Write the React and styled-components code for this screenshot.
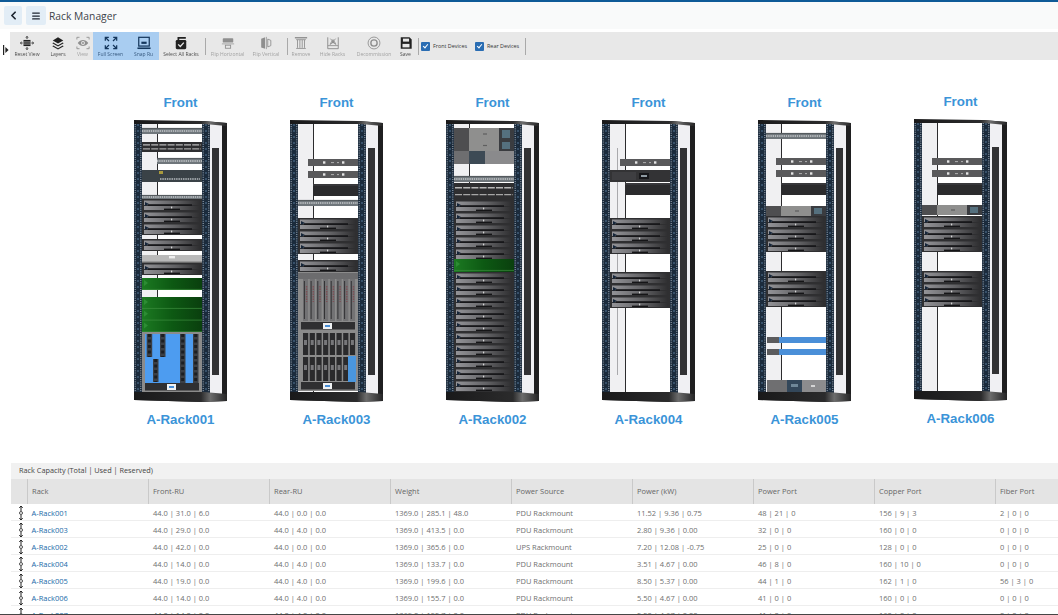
import React from 'react';
import styled, { createGlobalStyle } from 'styled-components';
import { ChevronLeft, Menu } from 'lucide-react';

const UI_FONT = '"Open Sans", "Noto Sans", sans-serif';

const GlobalStyle = createGlobalStyle`
  html, body {
    margin: 0;
    padding: 0;
    height: 100%;
    background: #fff;
    overflow: hidden;
    font-family: ${UI_FONT};
  }
  #root { height: 100%; }
`;

/* ---------- rack drawing, coordinates are px from the rack's top left ---------- */

const Rail = ({ x }) => (
  <g>
    <rect x={x} y="3" width="8" height="270" fill="#1b2b3c" />
    <line x1={x + 1.2} y1="4" x2={x + 1.2} y2="272" stroke="#c9d3dc" strokeWidth="0.9" strokeDasharray="0.9 1.3" />
    <line x1={x + 6.8} y1="4" x2={x + 6.8} y2="272" stroke="#c9d3dc" strokeWidth="0.9" strokeDasharray="0.9 1.3" />
    <line x1={x + 4} y1="4" x2={x + 4} y2="272" stroke="#3f5a75" strokeWidth="1.6" strokeDasharray="2 4" />
  </g>
);

const Server = ({ y }) => (
  <g>
    <rect x="8" y={y} width="60" height="12" fill="#2f2f31" />
    <rect x="10" y={y + 1.5} width="56" height="4.5" fill="url(#srvTop)" />
    <rect x="10" y={y + 7} width="56" height="4" fill="url(#srvTop)" />
    <rect x="14" y={y + 5.2} width="44" height="1.8" fill="#17171a" />
    <rect x="30" y={y + 9.6} width="16" height="1.4" fill="#151517" />
    <polygon points={`11,${y + 3} 15,${y + 5} 11,${y + 7}`} fill="#16263a" />
    <rect x="37" y={y + 7.6} width="1.2" height="1.8" fill="#d5d5d5" />
  </g>
);

const Green = ({ y, h }) => (
  <g>
    <rect x="8" y={y} width="60" height={h} fill="url(#greenFill)" />
    {Array.from({ length: Math.floor(h / 11.5) }, (_, i) => (
      <g key={i}>
        <polygon points={`10,${y + i * 11.7 + 2} 14,${y + i * 11.7 + 5} 10,${y + i * 11.7 + 8}`} fill="#2d8d34" />
        <line x1="8" y1={y + i * 11.7 + 11.4} x2="68" y2={y + i * 11.7 + 11.4} stroke="#3e8f3f" strokeWidth="0.7" />
      </g>
    ))}
  </g>
);

const Patch = ({ y, h = 6, from = 8 }) => (
  <g>
    <rect x={from} y={y} width={68 - from} height={h} fill="#6f767b" />
    <line x1={from} y1={y + h / 2} x2="68" y2={y + h / 2} stroke="#c5c9cc" strokeWidth="1.6" strokeDasharray="1.4 0.8" />
    <line x1={from} y1={y + 0.4} x2="68" y2={y + 0.4} stroke="#4a4f52" strokeWidth="0.8" />
  </g>
);

const DoublePatch = ({ y, h = 17 }) => (
  <g>
    <rect x="8" y={y} width="60" height={h} fill="#2e2e30" />
    <line x1="9" y1={y + h * 0.28} x2="67" y2={y + h * 0.28} stroke="#b9b9b9" strokeWidth="1.3" strokeDasharray="7 1.2" />
    <line x1="9" y1={y + h * 0.68} x2="67" y2={y + h * 0.68} stroke="#a6a6a6" strokeWidth="1.3" strokeDasharray="7 1.2" />
  </g>
);

const Pdu = ({ y, from = 18 }) => (
  <g>
    <rect x={from} y={y} width={68 - from} height="7" fill="#59595b" />
    <rect x={from + 15} y={y + 2.3} width="2.4" height="2.4" fill="#e6e6e6" />
    <rect x={from + 23} y={y + 3.2} width="3" height="0.9" fill="#bbb" />
    <rect x={from + 29} y={y + 3.2} width="2" height="0.9" fill="#bbb" />
    <rect x={from + 34} y={y + 2.3} width="2.4" height="2.4" fill="#e6e6e6" />
  </g>
);

const DarkPanel = ({ y, h = 12 }) => (
  <g>
    <rect x="23" y={y} width="45" height={h} fill="#2b2b2d" />
    <line x1="23" y1={y + 1} x2="68" y2={y + 1} stroke="#4d4d50" strokeWidth="0.8" />
  </g>
);

const Ups = ({ y }) => (
  <g>
    <rect x="8" y={y} width="60" height="12" fill="#333335" />
    <rect x="10" y={y + 2} width="24" height="8" fill="#3e3e41" />
    <rect x="37" y={y + 3} width="10" height="6" fill="#17171a" />
    <rect x="39" y={y + 5} width="6" height="2" fill="#8f9aa2" />
  </g>
);

/* front panel made of three blocks: dark, pale, bluish */
const Storage = ({ y, h = 10 }) => (
  <g>
    <rect x="8" y={y} width="15" height={h} fill="#4e4e50" />
    <rect x="23" y={y} width="30" height={h} fill="#8f8f8e" />
    <rect x="37" y={y + h / 2 - 0.6} width="4" height="1.2" fill="#5f5f5f" />
    <rect x="53" y={y} width="15" height={h} fill="#3a3c40" />
    <rect x="56" y={y + 2} width="8" height={h - 4} fill="#55707e" />
  </g>
);

const SilverServer = ({ y, h = 6 }) => (
  <g>
    <rect x="8" y={y} width="60" height={h} fill="#b9b9b9" />
    <rect x="8" y={y + h - 1.4} width="60" height="1.4" fill="#6a6a6a" />
    <rect x="35" y={y + 1} width="6" height="2.4" fill="#eee" />
  </g>
);

const ChassisBase = ({ y, h }) => (
  <g>
    <rect x="8" y={y} width="60" height={h} fill="#8b8b8b" />
    <rect x="11" y={y + h - 9} width="54" height="7.5" fill="#2f2f31" />
    <rect x="33" y={y + h - 8} width="9" height="6" fill="#f0f2f4" />
    <rect x="35" y={y + h - 6} width="5" height="2" fill="#4a8fd6" />
  </g>
);

const BlueChassis = ({ y }) => (
  <g>
    <ChassisBase y={y} h={60} />
    <rect x="11" y={y + 2} width="35" height="49" fill="#4d9cf0" />
    <rect x="51" y={y + 2} width="8" height="49" fill="#4d9cf0" />
    {[[12.7, 2, 23], [26, 2, 23], [19, 27, 23], [46, 2, 49], [59, 2, 49]].map(([x, top, len]) => (
      <g key={x}>
        <rect x={x} y={y + top} width="5.5" height={len} fill="#3b3f45" />
        <line x1={x + 2.7} y1={y + top} x2={x + 2.7} y2={y + top + len} stroke="#1c1e22" strokeWidth="3" strokeDasharray="3 2.5" />
      </g>
    ))}
  </g>
);

const BLADE_COLS = [13, 19.7, 26.4, 33.1, 39.8, 46.5, 53.2, 59.9];

const GreyChassis = ({ y }) => (
  <g>
    <ChassisBase y={y} h={59} />
    <rect x="8" y={y + 1} width="60" height="6" fill="#6c6c6e" />
    {BLADE_COLS.map((x) => (
      <g key={x}>
        <rect x={x} y={y + 7} width="5.2" height="42" fill="#727274" />
        <line x1={x + 1.4} y1={y + 9} x2={x + 1.4} y2={y + 47} stroke="#2a2a2c" strokeWidth="0.9" />
        <line x1={x + 3.6} y1={y + 14} x2={x + 3.6} y2={y + 30} stroke="#7d4f55" strokeWidth="1.4" strokeDasharray="1.5 1" />
      </g>
    ))}
  </g>
);

const DarkChassis = ({ y }) => (
  <g>
    <ChassisBase y={y} h={60} />
    {BLADE_COLS.map((x) => (
      <g key={x}>
        <rect x={x} y={y + 2} width="5.2" height="22" fill="#2a2a2c" />
        <rect x={x + 1} y={y + 9} width="3" height="5" fill="#77777a" />
        <rect x={x} y={y + 26} width="5.2" height="24" fill="#2a2a2c" />
        <rect x={x + 1} y={y + 34} width="3" height="5" fill="#77777a" />
      </g>
    ))}
    <rect x="58" y={y + 25} width="8" height="26" fill="#4a96de" />
  </g>
);

const BlueBar = ({ y }) => (
  <g>
    <rect x="9" y={y} width="12" height="6" fill="#5b5b5d" />
    <rect x="21" y={y} width="47" height="6" fill="#4a8fd8" />
  </g>
);

const BottomUnit = ({ y }) => (
  <g>
    <rect x="9" y={y} width="20" height="12" fill="#6f6f71" />
    <rect x="29" y={y} width="15" height="12" fill="#33475a" />
    <rect x="33" y={y + 4} width="7" height="3" fill="#6f8798" />
    <rect x="44" y={y} width="24" height="12" fill="#8c8c8e" />
    <rect x="53" y={y + 5} width="4" height="2" fill="#d5d5d5" />
  </g>
);

const servers = (start, count) =>
  Array.from({ length: count }, (_, i) => <Server key={`s${start}-${i}`} y={start + i * 12} />);

const Rack = ({ fittings, guide }) => (
  <RackFigure viewBox="0 0 94 282" width="94" height="282">
    <defs>
      <linearGradient id="srvTop" x1="0" x2="1" y1="0" y2="0">
        <stop offset="0" stopColor="#939397" />
        <stop offset="0.55" stopColor="#626265" />
        <stop offset="1" stopColor="#2e2e30" />
      </linearGradient>
      <linearGradient id="greenFill" x1="0" x2="1" y1="0" y2="0">
        <stop offset="0" stopColor="#1c7a22" />
        <stop offset="0.5" stopColor="#0d5913" />
        <stop offset="1" stopColor="#0a3f0e" />
      </linearGradient>
      <linearGradient id="frameTop" x1="0" x2="1" y1="0" y2="0">
        <stop offset="0" stopColor="#19191a" />
        <stop offset="0.72" stopColor="#2b2b2c" />
        <stop offset="0.82" stopColor="#6c6c6c" />
        <stop offset="1" stopColor="#242425" />
      </linearGradient>
    </defs>
    <polygon points="0,1 70,1 93,3 93,281 68,282 0,280" fill="#1f1f20" />
    <rect x="76" y="4" width="12" height="270" fill="#f0f0f3" />
    <rect x="78" y="28" width="7" height="227" fill="#323234" />
    <rect x="8" y="4" width="60" height="268" fill="#fff" />
    <rect x="8" y="4" width="15" height="268" fill="#f0f0f2" />
    <rect x="23" y="4" width="1" height="268" fill="#2c2c2e" />
    {guide && <rect x="15" y="28" width="1" height="227" fill="#a9a9ac" />}
    {fittings}
    <Rail x={0} />
    <Rail x={68} />
    <polygon points="0,0 68,1 93,3 93,6 70,4 0,4" fill="url(#frameTop)" />
    <polygon points="0,272 70,272 93,274 93,281 68,282 0,280" fill="url(#frameTop)" />
  </RackFigure>
);

const RACKS = [
  {
    name: 'A-Rack001',
    lift: 0,
    fittings: (
      <>
        <Patch y={8} />
        <DoublePatch y={22} h={10} />
        <Patch y={38} from={23} />
        <rect x="8" y="50" width="60" height="12" fill="#3a4247" />
        <rect x="25" y="51" width="4" height="3" fill="#a99a3c" />
        <line x1="26" y1="59" x2="66" y2="59" stroke="#b6bcc0" strokeWidth="1.5" strokeDasharray="1.5 0.8" />
        <Patch y={75} h={4} />
        {servers(79, 3)}
        {servers(119, 1)}
        <SilverServer y={135} h={8} />
        <Server y={143} />
        <Green y={158} h={12} />
        <Green y={177} h={35} />
        <BlueChassis y={212} />
      </>
    ),
  },
  {
    name: 'A-Rack003',
    lift: 0,
    fittings: (
      <>
        <Pdu y={39} />
        <Pdu y={51} />
        <DarkPanel y={64} />
        <Patch y={80} />
        {servers(98, 3)}
        <Server y={140} />
        <GreyChassis y={152} />
        <DarkChassis y={211} />
      </>
    ),
  },
  {
    name: 'A-Rack002',
    lift: 0,
    fittings: (
      <>
        <Storage y={8} h={12} />
        <Storage y={20} h={11} />
        <rect x="8" y="31" width="15" height="13" fill="#6e6e70" />
        <rect x="23" y="31" width="16" height="13" fill="#3d4a55" />
        <rect x="39" y="31" width="29" height="13" fill="#8a8a8c" />
        <Patch y={56} />
        <DoublePatch y={63} />
        {servers(80, 5)}
        <Green y={139} h={13} />
        {servers(152, 10)}
      </>
    ),
  },
  {
    name: 'A-Rack004',
    lift: 0.5,
    guide: true,
    fittings: (
      <>
        <Pdu y={39} />
        <Ups y={50} />
        <DarkPanel y={63} />
        {servers(98, 3)}
        {servers(152, 3)}
      </>
    ),
  },
  {
    name: 'A-Rack005',
    lift: 0.5,
    fittings: (
      <>
        <Patch y={13} />
        <Pdu y={38} />
        <Pdu y={50} />
        <DarkPanel y={63} />
        <Storage y={86} />
        {servers(96, 3)}
        {servers(151, 3)}
        <BlueBar y={217} />
        <BlueBar y={229} />
        <BottomUnit y={260} />
      </>
    ),
  },
  {
    name: 'A-Rack006',
    lift: 1,
    fittings: (
      <>
        <Pdu y={39} />
        <Pdu y={51} />
        <DarkPanel y={64} />
        <Storage y={86} />
        {servers(97, 3)}
        {servers(152, 3)}
      </>
    ),
  },
];

/* ---------- toolbar icons ---------- */

const Glyph = ({ children, color = 'currentColor', size = 14 }) => (
  <svg width={size} height={size} viewBox="0 0 16 16" fill="none" stroke={color} strokeWidth="1.4">
    {children}
  </svg>
);

const ResetIcon = () => (
  <Glyph>
    <rect x="4" y="4.5" width="8" height="7" fill="currentColor" stroke="none" />
    <path d="M4 6.8h8M4 9.2h8" stroke="#e8e8e8" strokeWidth="0.7" />
    <path d="M8 .5v3M6.8 1.8 8 .5l1.2 1.3M8 15.5v-3M6.8 14.2 8 15.5l1.2-1.3M.5 8h2.5M1.8 6.8.5 8l1.3 1.2M15.5 8H13M14.2 6.8 15.5 8l-1.3 1.2" strokeWidth="1" />
  </Glyph>
);

const LayersIcon = () => (
  <Glyph>
    <path d="M8 1.5 14 5 8 8.5 2 5Z" fill="currentColor" stroke="none" />
    <path d="M2.6 7.5 8 10.6l5.4-3.1L14.5 8.3 8 12 1.5 8.3Z" fill="currentColor" stroke="none" />
    <path d="M2.6 10.8 8 13.9l5.4-3.1 1.1.8L8 15.3 1.5 11.6Z" fill="currentColor" stroke="none" />
  </Glyph>
);

const ViewIcon = () => (
  <Glyph>
    <path d="M1 4V1.5h3M12 1.5h3V4M15 12v2.5h-3M4 14.5H1V12" strokeWidth="1" />
    <path d="M2 8c3-4.4 9-4.4 12 0-3 4.4-9 4.4-12 0Z" fill="currentColor" stroke="none" />
    <circle cx="8" cy="8" r="2.2" fill="#e8e8e8" stroke="none" />
    <circle cx="8" cy="8" r="1.1" fill="currentColor" stroke="none" />
  </Glyph>
);

const FullScreenIcon = () => (
  <Glyph>
    <path d="M1.5 5.5v-4h4M1.7 1.7l4 4M14.5 5.5v-4h-4M14.3 1.7l-4 4M1.5 10.5v4h4M1.7 14.3l4-4M14.5 10.5v4h-4M14.3 14.3l-4-4" />
  </Glyph>
);

const SnapIcon = () => (
  <Glyph>
    <rect x="2" y="1.5" width="12" height="10" />
    <rect x="5" y="6.5" width="6" height="2.5" fill="currentColor" stroke="none" />
    <path d="M.5 14h15" strokeWidth="1.8" />
  </Glyph>
);

const SelectAllIcon = () => (
  <Glyph>
    <path d="M4 1h9.5v2H6v2H4Z" fill="currentColor" stroke="none" />
    <rect x="2" y="4.5" width="12" height="10.5" rx="1.5" fill="currentColor" stroke="none" />
    <path d="M4.8 9.6 7.2 12l4-4.4" stroke="#e8e8e8" strokeWidth="1.5" />
  </Glyph>
);

const FlipHorizontalIcon = () => (
  <Glyph>
    <rect x="2" y="2.5" width="12" height="5" rx="1" fill="currentColor" stroke="none" />
    <path d="M1 9h14" strokeWidth="0.8" />
    <rect x="5" y="10.5" width="6" height="3.5" stroke="currentColor" strokeWidth="1" />
  </Glyph>
);

const FlipVerticalIcon = () => (
  <Glyph>
    <path d="M2.5 3 7 1.5v13L2.5 13Z" fill="currentColor" stroke="none" />
    <path d="M8.5 1v14" strokeWidth="0.8" />
    <path d="M10 3.5 13.5 5v6L10 12.5Z" strokeWidth="1" />
  </Glyph>
);

const RemoveIcon = () => (
  <Glyph>
    <path d="M1 2h14" strokeWidth="1.6" />
    <path d="M2.5 4.2h11M4 4.5v9M6.7 4.5v9M9.4 4.5v9M12 4.5v9M2.5 14.2h11" strokeWidth="1" />
  </Glyph>
);

const HideRacksIcon = () => (
  <Glyph>
    <path d="M2 1.5v13h12v-13" strokeWidth="1.1" />
    <path d="M2 11h12" strokeWidth="1" />
    <path d="M4.5 9.5 8 4l3.5 5.5M5 3l6 7M11 3l-6 7" strokeWidth="1" />
    <circle cx="8" cy="7" r="1.4" fill="currentColor" stroke="none" />
  </Glyph>
);

const DecommissionIcon = () => (
  <Glyph>
    <circle cx="8" cy="8" r="6.8" strokeWidth="1" />
    <circle cx="8" cy="8" r="3.6" strokeWidth="1.6" />
  </Glyph>
);

const SaveIcon = () => (
  <Glyph>
    <path d="M2 1.5h10l2.5 2.5v10.5H2Z" fill="currentColor" stroke="none" />
    <rect x="4.5" y="3" width="7" height="3.4" fill="#e8e8e8" stroke="none" />
    <rect x="4" y="9" width="8" height="4" fill="#e8e8e8" stroke="none" />
  </Glyph>
);

const DragHandle = () => (
  <svg width="6" height="14" viewBox="0 0 6 14" fill="none" stroke="#222" strokeWidth="1">
    <path d="M3 0v5M1.3 1.9 3 0l1.7 1.9M3 14V9M1.3 12.1 3 14l1.7-1.9" />
    <circle cx="3" cy="7" r="1.5" strokeWidth="0.8" />
  </svg>
);

const TOOLS = [
  { label: 'Reset View', width: 34, icon: <ResetIcon /> },
  { label: 'Layers', width: 28, icon: <LayersIcon /> },
  { label: 'View', width: 21, icon: <ViewIcon />, off: true },
  { label: 'Full Screen', width: 35, icon: <FullScreenIcon />, on: true },
  { label: 'Snap Ru', width: 31, icon: <SnapIcon />, on: true },
  { label: 'Select All Racks', width: 44, icon: <SelectAllIcon /> },
  { divider: true },
  { label: 'Flip Horizontal', width: 39, icon: <FlipHorizontalIcon />, off: true },
  { label: 'Flip Vertical', width: 38, icon: <FlipVerticalIcon />, off: true },
  { divider: true },
  { label: 'Remove', width: 22, icon: <RemoveIcon />, off: true },
  { label: 'Hide Racks', width: 41, icon: <HideRacksIcon />, off: true },
  { label: 'Decommission', width: 42, icon: <DecommissionIcon />, off: true },
  { label: 'Save', width: 21, icon: <SaveIcon /> },
  { divider: true },
];

/* ---------- table data ---------- */

const COLUMNS = ['Rack', 'Front-RU', 'Rear-RU', 'Weight', 'Power Source', 'Power (kW)', 'Power Port', 'Copper Port', 'Fiber Port'];

const ROWS = [
  ['A-Rack001', '44.0 | 31.0 | 6.0', '44.0 | 0.0 | 0.0', '1369.0 | 285.1 | 48.0', 'PDU Rackmount', '11.52 | 9.36 | 0.75', '48 | 21 | 0', '156 | 9 | 3', '2 | 0 | 0'],
  ['A-Rack003', '44.0 | 29.0 | 0.0', '44.0 | 4.0 | 0.0', '1369.0 | 413.5 | 0.0', 'PDU Rackmount', '2.80 | 9.36 | 0.00', '32 | 0 | 0', '160 | 0 | 0', '0 | 0 | 0'],
  ['A-Rack002', '44.0 | 42.0 | 0.0', '44.0 | 0.0 | 0.0', '1369.0 | 365.6 | 0.0', 'UPS Rackmount', '7.20 | 12.08 | -0.75', '25 | 0 | 0', '128 | 0 | 0', '0 | 0 | 0'],
  ['A-Rack004', '44.0 | 14.0 | 0.0', '44.0 | 4.0 | 0.0', '1369.0 | 133.7 | 0.0', 'PDU Rackmount', '3.51 | 4.67 | 0.00', '46 | 8 | 0', '160 | 10 | 0', '0 | 0 | 0'],
  ['A-Rack005', '44.0 | 19.0 | 0.0', '44.0 | 4.0 | 0.0', '1369.0 | 199.6 | 0.0', 'PDU Rackmount', '8.50 | 5.37 | 0.00', '44 | 1 | 0', '162 | 1 | 0', '56 | 3 | 0'],
  ['A-Rack006', '44.0 | 14.0 | 0.0', '44.0 | 4.0 | 0.0', '1369.0 | 155.7 | 0.0', 'PDU Rackmount', '5.50 | 4.67 | 0.00', '41 | 0 | 0', '160 | 0 | 0', '0 | 0 | 0'],
  ['A-Rack007', '44.0 | 14.0 | 0.0', '44.0 | 4.0 | 0.0', '1369.0 | 155.7 | 0.0', 'PDU Rackmount', '5.50 | 4.67 | 0.00', '41 | 0 | 0', '160 | 0 | 0', '0 | 0 | 0'],
];

const App = () => (
  <Page>
    <GlobalStyle />
    <TopBar />
    <Header>
      <HeaderButton><ChevronLeft size={13} strokeWidth={3.2} /></HeaderButton>
      <HeaderButton $wide><Menu size={10} strokeWidth={3} /></HeaderButton>
      <Title>Rack Manager</Title>
    </Header>

    <ToolRow>
      <Handle>
        <svg width="6" height="10" viewBox="0 0 6 10">
          <rect x="0" y="0" width="1.2" height="10" fill="#222" />
          <polygon points="2.4,2 5.6,5 2.4,8" fill="#222" />
        </svg>
      </Handle>
      <Toolbar>
        {TOOLS.map((tool, i) =>
          tool.divider ? (
            <Divider key={i} />
          ) : (
            <ToolButton key={tool.label} $on={tool.on} $off={tool.off} $width={tool.width}>
              {tool.icon}
              <ToolLabel>{tool.label}</ToolLabel>
            </ToolButton>
          ),
        )}
        <CheckItem>
          <CheckBox />
          Front Devices
        </CheckItem>
        <CheckItem>
          <CheckBox />
          Rear Devices
        </CheckItem>
        <Divider />
      </Toolbar>
    </ToolRow>

    <Canvas>
      {RACKS.map((rack) => (
        <RackColumn key={rack.name} $lift={rack.lift}>
          <RackCaption>Front</RackCaption>
          <Rack fittings={rack.fittings} guide={rack.guide} />
          <RackCaption>{rack.name}</RackCaption>
        </RackColumn>
      ))}
    </Canvas>

    <TablePanel>
      <TableTitle>Rack Capacity (Total | Used | Reserved)</TableTitle>
      <TableHead>
        <HeadCell />
        {COLUMNS.map((col) => (
          <HeadCell key={col}>{col}</HeadCell>
        ))}
      </TableHead>
      {ROWS.map((row) => (
        <TableRow key={row[0]}>
          <HandleCell><DragHandle /></HandleCell>
          {row.map((value, i) =>
            i === 0 ? <RackLink key={i}>{value}</RackLink> : <Cell key={i}>{value}</Cell>,
          )}
        </TableRow>
      ))}
    </TablePanel>
    <BottomEdge />
  </Page>
);

const Page = styled.div`
  height: 615px;
  display: flex;
  flex-direction: column;
  overflow: hidden;
  position: relative;
  background: #fff;
`;

const TopBar = styled.div`
  height: 2px;
  flex: none;
  background: #0e5a97;
`;

const Header = styled.header`
  height: 27px;
  flex: none;
  display: flex;
  align-items: center;
  gap: 4px;
  padding-left: 4px;
  background: #f9fafa;
  box-sizing: border-box;
`;

const HeaderButton = styled.button`
  width: ${(props) => (props.$wide ? 20 : 18)}px;
  height: 19px;
  padding: 0;
  border: 0;
  border-radius: 2px;
  background: #e2edf6;
  color: #1c2530;
  display: flex;
  align-items: center;
  justify-content: center;
`;

const Title = styled.h1`
  margin: 0 0 0 -1px;
  font-size: 10.3px;
  font-weight: 400;
  color: #3e444a;
`;

const ToolRow = styled.div`
  height: 28px;
  flex: none;
  margin-top: 3px;
  display: flex;
`;

const Handle = styled.div`
  width: 10px;
  flex: none;
  padding: 6px 0 0 3px;
  box-sizing: border-box;
`;

const Toolbar = styled.div`
  flex: 1;
  display: flex;
  align-items: stretch;
  background: #e8e8e8;
  color: #222;
`;

const ToolButton = styled.div`
  width: ${(props) => props.$width}px;
  flex: none;
  padding-top: 4px;
  box-sizing: border-box;
  display: flex;
  flex-direction: column;
  align-items: center;
  gap: 1px;
  white-space: nowrap;
  background: ${(props) => (props.$on ? '#a9cdf1' : 'transparent')};
  color: ${(props) => (props.$off ? '#8f8f8f' : props.$on ? '#14365c' : '#222')};
`;

const ToolLabel = styled.span`
  font-size: 5px;
  line-height: 6px;
  opacity: 0.8;
`;

const Divider = styled.span`
  width: 1px;
  flex: none;
  margin: 6px 2px 5px;
  background: #a9a9a9;
`;

const CheckItem = styled.label`
  display: flex;
  align-items: center;
  gap: 3px;
  padding-right: 4px;
  font-size: 5.4px;
  color: #333;
  white-space: nowrap;

  & + & {
    margin-left: 4px;
  }
`;

const CheckBox = styled.span`
  width: 9px;
  height: 9px;
  flex: none;
  border-radius: 1px;
  background: #2a6db3;
  position: relative;

  &::after {
    content: '';
    position: absolute;
    left: 3px;
    top: 1px;
    width: 2px;
    height: 4px;
    border: solid #fff;
    border-width: 0 1px 1px 0;
    transform: rotate(40deg);
  }
`;

const Canvas = styled.main`
  height: 403px;
  flex: none;
  box-sizing: border-box;
  padding: 36px 0 0 103px;
  display: flex;
  align-items: flex-start;
`;

const RackColumn = styled.section`
  width: 156px;
  flex: none;
  display: flex;
  flex-direction: column;
  align-items: center;
  margin-top: ${(props) => -props.$lift}px;
`;

const RackCaption = styled.div`
  height: 14px;
  margin: 0 1px 10px 0;
  font: 700 13.3px/14px "Liberation Sans", Arial, sans-serif;
  color: #3b94d8;
  white-space: nowrap;

  svg + & {
    margin: 11px 1px 0 0;
  }
`;

const RackFigure = styled.svg`
  display: block;
  flex: none;
  filter: blur(0.35px);
`;

const TablePanel = styled.section`
  flex: 1;
  min-height: 0;
  margin-left: 11px;
  overflow: hidden;
  font-size: 7.5px;
  color: #6f6f6f;
`;

const TableTitle = styled.div`
  height: 16px;
  padding-left: 8px;
  font-size: 7.3px;
  line-height: 14px;
  background: #f1f1f1;
  color: #444;
`;

const gridColumns = `
  display: grid;
  grid-template-columns: 16px repeat(8, 121px) 1fr;
`;

const TableHead = styled.div`
  ${gridColumns}
  height: 25px;
  background: #e4e4e4;
`;

const HeadCell = styled.div`
  border-left: 1px solid #c9c9c9;
  padding-left: 4px;
  line-height: 25px;
  color: #666;

  &:first-child {
    border-left: 0;
  }
`;

const TableRow = styled.div`
  ${gridColumns}
  height: 17px;
  box-sizing: border-box;
  border-bottom: 1px solid #eeeeee;
  line-height: 18px;
`;

const HandleCell = styled.div`
  display: flex;
  align-items: center;
  padding-left: 7px;
`;

const Cell = styled.div`
  padding-left: 5px;
  white-space: nowrap;
`;

const RackLink = styled(Cell)`
  padding-left: 4.5px;
  color: #1a6aa8;
`;

const BottomEdge = styled.div`
  position: absolute;
  left: 0;
  right: 0;
  bottom: 0;
  height: 1.5px;
  background: #454545;
`;

export default App;
